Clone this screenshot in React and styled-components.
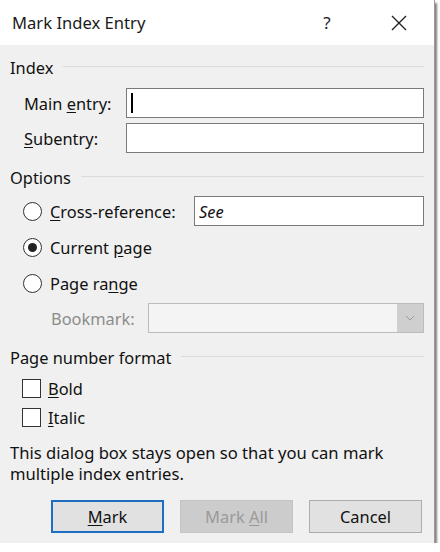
import React from "react";
import styled, { createGlobalStyle } from "styled-components";

const Global = createGlobalStyle`
  html, body { margin: 0; padding: 0; background: #ffffff; overflow: hidden; }
  body { font-family: "Noto Sans", "Open Sans", sans-serif; color: #111; }
`;

const Window = styled.div`
  width: 434px;
  height: 543px;
  display: flex;
  flex-direction: column;
  background: #f0f0f0;
  box-shadow: 1px 0 0 #9a9a9a, 3px 3px 2px rgba(0, 0, 0, 0.5);
  box-sizing: border-box;
`;

const TitleBar = styled.div`
  height: 45px;
  flex: none;
  background: #ffffff;
  display: flex;
  align-items: center;
  padding-left: 12px;
  font-size: 16.6px;
  color: #1b1b1b;
`;

const Title = styled.div`
  flex: 1;
`;

const TitleButton = styled.div`
  width: 46px;
  height: 45px;
  display: flex;
  align-items: center;
  justify-content: center;
  font-size: 17px;
  color: #222;
  margin-right: ${(p) => p.$mr || 0}px;
`;

const Body = styled.div`
  display: flex;
  flex-direction: column;
  padding: 0 10px;
`;

const SectionHeader = styled.div`
  height: 22px;
  margin-top: ${(p) => p.$mt}px;
  display: flex;
  align-items: center;
  gap: 10px;
  font-size: 16.4px;
  &::after {
    content: "";
    flex: 1;
    height: 1px;
    background: #dadada;
    margin-top: -2px;
  }
`;

const FieldRow = styled.div`
  height: 30px;
  margin-top: ${(p) => p.$mt}px;
  display: flex;
  align-items: center;
  padding-left: ${(p) => p.$indent || 0}px;
`;

const Label = styled.div`
  width: ${(p) => p.$w}px;
  flex: none;
  font-size: 16.4px;
  color: ${(p) => (p.$disabled ? "#8c8c8c" : "#111")};
  white-space: nowrap;
`;

const Key = styled.span`
  text-decoration: underline;
  text-underline-offset: 2px;
`;

const TextBox = styled.div`
  flex: 1;
  height: 30px;
  box-sizing: border-box;
  background: #ffffff;
  border: 1px solid #7a7a7a;
  display: flex;
  align-items: center;
  padding-left: 4px;
  font-size: 16.4px;
  font-style: ${(p) => (p.$italic ? "italic" : "normal")};
`;

const Caret = styled.div`
  width: 2px;
  height: 20px;
  background: #000;
`;

const RadioCircle = styled.div`
  width: 19px;
  height: 19px;
  box-sizing: border-box;
  border-radius: 50%;
  border: 1.5px solid #333;
  background: #fff;
  display: flex;
  align-items: center;
  justify-content: center;
  margin-left: 13px;
  margin-right: 8px;
  flex: none;
  &::after {
    content: "";
    width: 9px;
    height: 9px;
    border-radius: 50%;
    background: ${(p) => (p.$checked ? "#222" : "transparent")};
  }
`;

const ComboBox = styled.div`
  flex: 1;
  height: 30px;
  box-sizing: border-box;
  border: 1px solid #bcbcbc;
  background: #f4f4f4;
  display: flex;
  justify-content: flex-end;
`;

const ComboButton = styled.div`
  width: 26px;
  background: #cfcfcf;
  display: flex;
  align-items: center;
  justify-content: center;
`;

const CheckRow = styled.div`
  height: 20px;
  margin-top: ${(p) => p.$mt}px;
  display: flex;
  align-items: center;
  padding-left: 12px;
  font-size: 16.4px;
`;

const CheckBox = styled.div`
  width: 19px;
  height: 19px;
  box-sizing: border-box;
  border: 1.5px solid #333;
  background: #fff;
  margin-right: 7px;
`;

const Note = styled.div`
  margin-top: 15px;
  font-size: 16.6px;
  line-height: 21px;
  white-space: nowrap;
`;

const ButtonRow = styled.div`
  margin-top: 16px;
  display: flex;
  justify-content: flex-end;
  gap: 16px;
  padding-right: 2px;
`;

const Button = styled.div`
  width: 113px;
  height: 33px;
  box-sizing: border-box;
  display: flex;
  align-items: center;
  justify-content: center;
  font-size: 16.4px;
  background: ${(p) => (p.$disabled ? "#cccccc" : "#e1e1e1")};
  color: ${(p) => (p.$disabled ? "#9a9a9a" : "#111")};
  border: ${(p) =>
    p.$default ? "2px solid #1f6fc0" : p.$disabled ? "1px solid #c4c4c4" : "1px solid #adadad"};
`;

export default function App() {
  return (
    <>
      <Global />
      <Window>
        <TitleBar>
          <Title>Mark Index Entry</Title>
          <TitleButton $mr={26}>?</TitleButton>
          <TitleButton $mr={12}>
            <svg width="16" height="16" viewBox="0 0 16 16">
              <path d="M1 1 L15 15 M15 1 L1 15" stroke="#222" strokeWidth="1.4" fill="none" />
            </svg>
          </TitleButton>
        </TitleBar>
        <Body>
          <SectionHeader $mt={11}>Index</SectionHeader>
          <FieldRow $mt={10} $indent={14}>
            <Label $w={102}>Main <Key>e</Key>ntry:</Label>
            <TextBox>
              <Caret />
            </TextBox>
          </FieldRow>
          <FieldRow $mt={5} $indent={14}>
            <Label $w={102}><Key>S</Key>ubentry:</Label>
            <TextBox />
          </FieldRow>
          <SectionHeader $mt={13}>Options</SectionHeader>
          <FieldRow $mt={8}>
            <RadioCircle />
            <Label $w={144}><Key>C</Key>ross-reference:</Label>
            <TextBox $italic>See</TextBox>
          </FieldRow>
          <FieldRow $mt={6}>
            <RadioCircle $checked />
            <Label $w={150}>Current <Key>p</Key>age</Label>
          </FieldRow>
          <FieldRow $mt={6}>
            <RadioCircle />
            <Label $w={150}>Page ra<Key>n</Key>ge</Label>
          </FieldRow>
          <FieldRow $mt={5} $indent={41}>
            <Label $w={97} $disabled>Bookmark:</Label>
            <ComboBox>
              <ComboButton>
                <svg width="10" height="6" viewBox="0 0 10 6">
                  <path d="M1 1 L5 5 L9 1" stroke="#9a9a9a" strokeWidth="1" fill="none" />
                </svg>
              </ComboButton>
            </ComboBox>
          </FieldRow>
          <SectionHeader $mt={13}>Page number format</SectionHeader>
          <CheckRow $mt={10}>
            <CheckBox />
            <span><Key>B</Key>old</span>
          </CheckRow>
          <CheckRow $mt={9}>
            <CheckBox />
            <span><Key>I</Key>talic</span>
          </CheckRow>
          <Note>
            This dialog box stays open so that you can mark
            <br />
            multiple index entries.
          </Note>
          <ButtonRow>
            <Button $default><span><Key>M</Key>ark</span></Button>
            <Button $disabled><span>Mark <Key>A</Key>ll</span></Button>
            <Button><span>Cancel</span></Button>
          </ButtonRow>
        </Body>
      </Window>
    </>
  );
}
